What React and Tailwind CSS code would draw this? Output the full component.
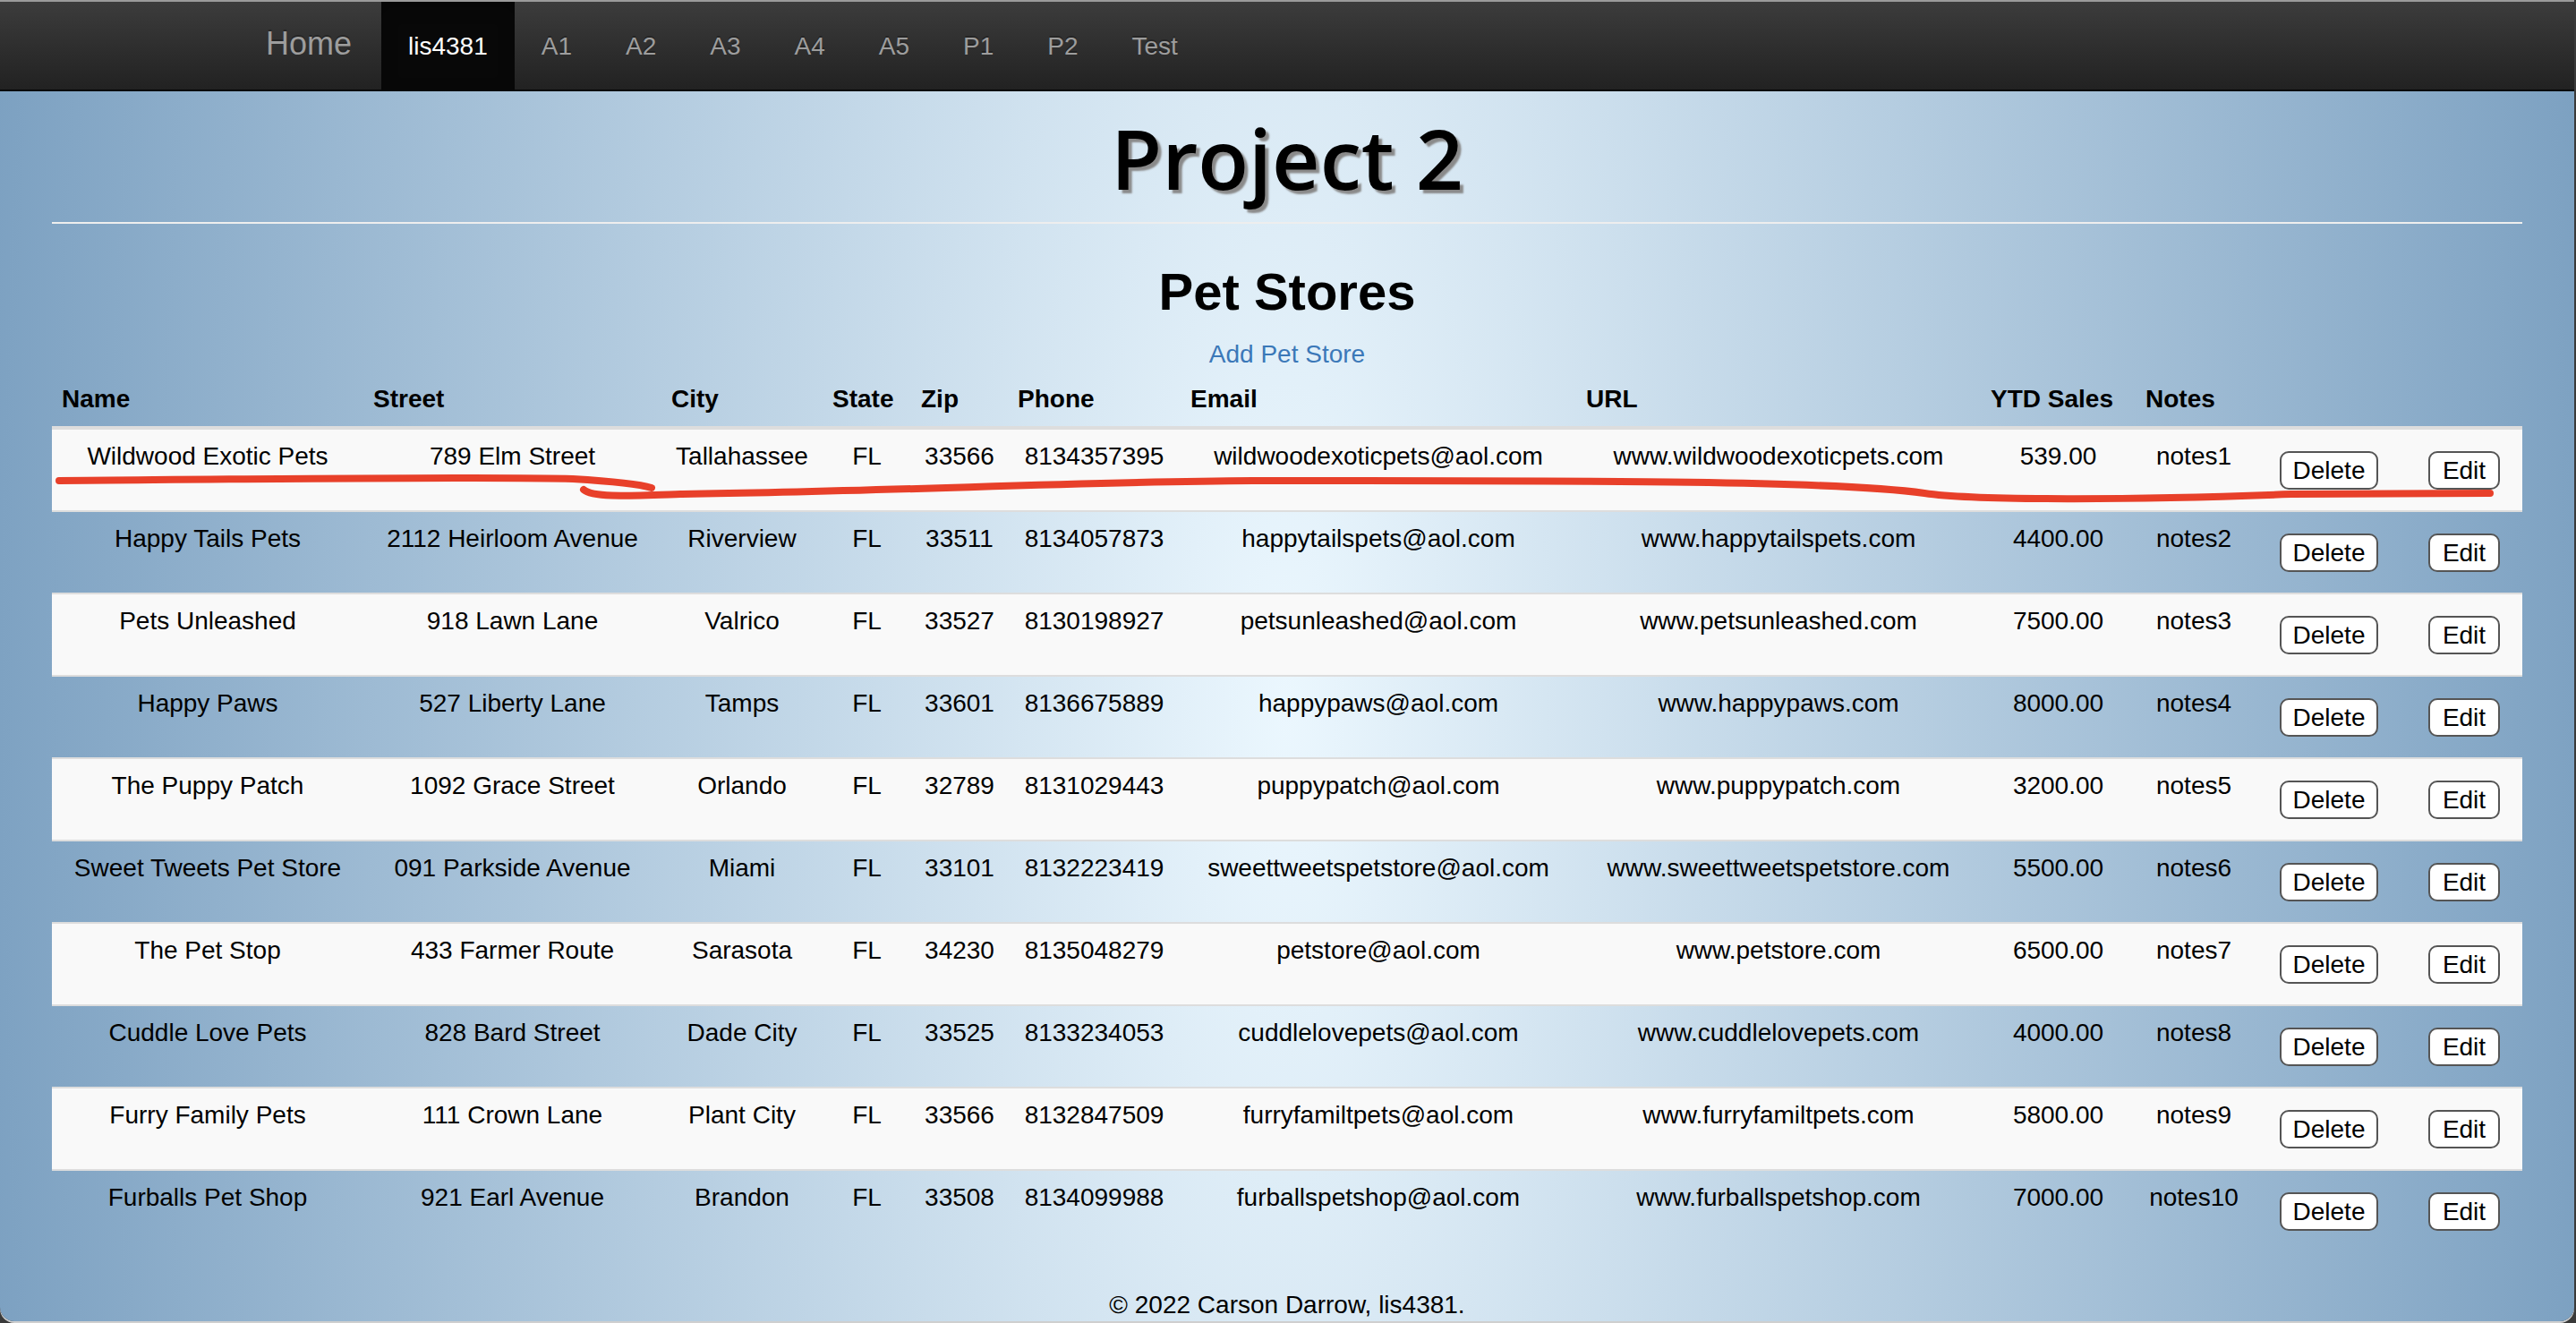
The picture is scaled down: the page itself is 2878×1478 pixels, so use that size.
import React from "react";

const stores = [
  ["Wildwood Exotic Pets", "789 Elm Street", "Tallahassee", "FL", "33566", "8134357395", "wildwoodexoticpets@aol.com", "www.wildwoodexoticpets.com", "539.00", "notes1"],
  ["Happy Tails Pets", "2112 Heirloom Avenue", "Riverview", "FL", "33511", "8134057873", "happytailspets@aol.com", "www.happytailspets.com", "4400.00", "notes2"],
  ["Pets Unleashed", "918 Lawn Lane", "Valrico", "FL", "33527", "8130198927", "petsunleashed@aol.com", "www.petsunleashed.com", "7500.00", "notes3"],
  ["Happy Paws", "527 Liberty Lane", "Tamps", "FL", "33601", "8136675889", "happypaws@aol.com", "www.happypaws.com", "8000.00", "notes4"],
  ["The Puppy Patch", "1092 Grace Street", "Orlando", "FL", "32789", "8131029443", "puppypatch@aol.com", "www.puppypatch.com", "3200.00", "notes5"],
  ["Sweet Tweets Pet Store", "091 Parkside Avenue", "Miami", "FL", "33101", "8132223419", "sweettweetspetstore@aol.com", "www.sweettweetspetstore.com", "5500.00", "notes6"],
  ["The Pet Stop", "433 Farmer Route", "Sarasota", "FL", "34230", "8135048279", "petstore@aol.com", "www.petstore.com", "6500.00", "notes7"],
  ["Cuddle Love Pets", "828 Bard Street", "Dade City", "FL", "33525", "8133234053", "cuddlelovepets@aol.com", "www.cuddlelovepets.com", "4000.00", "notes8"],
  ["Furry Family Pets", "111 Crown Lane", "Plant City", "FL", "33566", "8132847509", "furryfamiltpets@aol.com", "www.furryfamiltpets.com", "5800.00", "notes9"],
  ["Furballs Pet Shop", "921 Earl Avenue", "Brandon", "FL", "33508", "8134099988", "furballspetshop@aol.com", "www.furballspetshop.com", "7000.00", "notes10"],
];

const headers = ["Name", "Street", "City", "State", "Zip", "Phone", "Email", "URL", "YTD Sales", "Notes", "", ""];
const widths = [348, 333, 180, 99, 108, 193, 442, 452, 173, 130, 172, 130];

const navItems = ["A1", "A2", "A3", "A4", "A5", "P1", "P2", "Test"];

export default function App() {
  return (
    <div className="relative w-[2878px] h-[1478px] overflow-hidden bg-[#3a3a3a] font-['Liberation_Sans',Arial,sans-serif]">
      <div className="w-[2876px] h-[1476px] rounded-b-[16px] overflow-hidden border-t-2 border-[#9b9b9b] flex flex-col shadow-[0_2px_0_#cfcfcf]">
        <nav className="h-[100px] shrink-0 border-b-2 border-[#080808] bg-gradient-to-b from-[#3c3c3c] to-[#222222] flex items-stretch pl-[267px]">
          <a className="block w-[159px] pl-[30px] pt-[27px] text-[36px] leading-[40px] text-[#9d9d9d] [text-shadow:0_-2px_0_rgba(0,0,0,0.25)]">
            Home
          </a>
          <a className="block px-[30px] pt-[30px] text-[28px] leading-[40px] text-white bg-[#080808] shadow-[inset_0_6px_18px_rgba(0,0,0,0.25)]">
            lis4381
          </a>
          {navItems.map((n) => (
            <a key={n} className="block px-[30px] pt-[30px] text-[28px] leading-[40px] text-[#9d9d9d] [text-shadow:0_-2px_0_rgba(0,0,0,0.25)]">
              {n}
            </a>
          ))}
        </nav>

        <main className="flex-1 px-[58px] bg-[radial-gradient(ellipse_1490px_4600px_at_50%_50%,#ebf7fe_0%,#7a9fc0_100%)] text-black">
          <h1 className="mt-[24px] text-center font-['Open_Sans',sans-serif] font-semibold text-[93px] leading-[100px] text-black [text-shadow:4px_4px_2px_#8a8a8a]">
            Project 2
          </h1>
          <div className="mt-[22px] h-[2px] bg-[#eeeeee]" />
          <h2 className="mt-[43px] mb-[17px] text-center text-[58px] leading-[66px] font-bold">Pet Stores</h2>
          <div className="text-center text-[28px] leading-[40px]">
            <a className="text-[#3b78b8]">Add Pet Store</a>
          </div>

          <table className="table-fixed border-collapse w-[2760px] mb-[40px] text-[28px] leading-[40px]">
            <colgroup>
              {widths.map((w, i) => (
                <col key={i} style={{ width: w }} />
              ))}
            </colgroup>
            <thead>
              <tr>
                {headers.map((h, i) => (
                  <th key={i} className="px-[11px] py-[10px] text-left align-bottom font-bold whitespace-nowrap border-b-4 border-[#dddddd]">
                    {h}
                  </th>
                ))}
              </tr>
            </thead>
            <tbody>
              {stores.map((s, ri) => (
                <tr key={ri} className={ri % 2 === 0 ? "bg-[#f9f9f9]" : ""}>
                  {s.map((c, ci) => (
                    <td key={ci} className={"px-[11px] py-[10px] text-center align-top whitespace-nowrap border-[#dddddd] " + (ri > 0 ? "border-t-2" : "")}>
                      {c}
                    </td>
                  ))}
                  <td className={"px-[11px] py-[10px] align-top border-[#dddddd] " + (ri > 0 ? "border-t-2" : "")}>
                    <div className="pt-[14px] pb-[13px]">
                      <button className="block mx-auto w-[110px] h-[43px] bg-white border-2 border-[#555555] rounded-[10px] text-[28px] leading-none text-black">
                        Delete
                      </button>
                    </div>
                  </td>
                  <td className={"px-[11px] py-[10px] align-top border-[#dddddd] " + (ri > 0 ? "border-t-2" : "")}>
                    <div className="pt-[14px] pb-[13px]">
                      <button className="block mx-auto w-[80px] h-[43px] bg-white border-2 border-[#555555] rounded-[10px] text-[28px] leading-none text-black">
                        Edit
                      </button>
                    </div>
                  </td>
                </tr>
              ))}
            </tbody>
          </table>

          <footer className="text-center text-[28px] leading-[40px]">© 2022 Carson Darrow, lis4381.</footer>
        </main>
      </div>

      <svg className="absolute left-0 top-0 pointer-events-none" width="2878" height="1478" viewBox="0 0 2878 1478">
        <path
          d="M66 537 C300 535 560 532 640 535 C690 538 715 541 728 545"
          fill="none"
          stroke="#e8402a"
          strokeWidth="8"
          strokeLinecap="round"
        />
        <path
          d="M652 547 C662 556 700 554 760 552 C1000 549 1200 538 1400 537 C1800 537 2050 537 2150 551 C2210 560 2400 558 2560 552 L2782 551"
          fill="none"
          stroke="#e8402a"
          strokeWidth="8"
          strokeLinecap="round"
        />
      </svg>
    </div>
  );
}
